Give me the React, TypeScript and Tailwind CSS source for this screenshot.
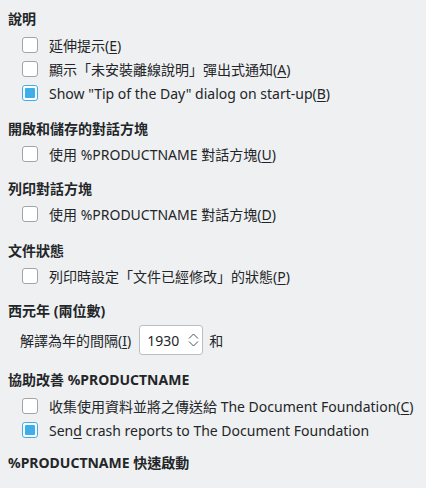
import type { ReactNode } from "react";

const FONT = "font-['Noto_Sans','Noto_Sans_CJK_TC',sans-serif]";

function Heading({ children }: { children: ReactNode }) {
  return <div className="flex h-5 items-center pl-2 font-bold">{children}</div>;
}

function Check({ checked, children }: { checked?: boolean; children: ReactNode }) {
  return (
    <div className="flex h-6 items-center pl-[22px]">
      <span
        className={`flex h-4 w-4 shrink-0 items-center justify-center rounded-[3px] border bg-white ${
          checked ? "border-[#3daee9]" : "border-[#a2a4a6]"
        }`}
      >
        {checked && <span className="h-2.5 w-2.5 rounded-[1px] bg-[#3daee9]" />}
      </span>
      <span className="ml-[11px] whitespace-nowrap">{children}</span>
    </div>
  );
}

const U = ({ children }: { children: ReactNode }) => (
  <span className="underline underline-offset-2">{children}</span>
);

export default function App() {
  return (
    <div className={`h-[488px] w-[426px] overflow-hidden bg-[#eff0f1] pt-2 text-[14px] text-[#232629] ${FONT}`}>
      <Heading>說明</Heading>
      <div className="mt-[5px]">
        <Check>
          延伸提示(<U>E</U>)
        </Check>
        <Check>
          顯示「未安裝離線說明」彈出式通知(<U>A</U>)
        </Check>
        <Check checked>
          Show "Tip of the Day" dialog on start-up(<U>B</U>)
        </Check>
      </div>

      <div className="mt-[13px]">
        <Heading>開啟和儲存的對話方塊</Heading>
        <div className="mt-1">
          <Check>
            使用 %PRODUCTNAME 對話方塊(<U>U</U>)
          </Check>
        </div>
      </div>

      <div className="mt-3">
        <Heading>列印對話方塊</Heading>
        <div className="mt-1">
          <Check>
            使用 %PRODUCTNAME 對話方塊(<U>D</U>)
          </Check>
        </div>
      </div>

      <div className="mt-[14px]">
        <Heading>文件狀態</Heading>
        <div className="mt-1">
          <Check>
            列印時設定「文件已經修改」的狀態(<U>P</U>)
          </Check>
        </div>
      </div>

      <div className="mt-3">
        <Heading>西元年 (兩位數)</Heading>
        <div className="mt-[5px] flex h-[30px] items-center pl-[20px]">
          <span>
            解譯為年的間隔(<U>I</U>)
          </span>
          <div className="ml-[8px] flex h-[30px] w-[64px] items-center rounded-[3px] border border-[#bcbebf] bg-white pl-[7px]">
            <span>1930</span>
            <svg className="ml-auto mr-[3px]" width="11" height="16" viewBox="0 0 11 16" fill="none" stroke="#4d4f52" strokeWidth="1">
              <path d="M1 6.5 L5.5 2 L10 6.5" />
              <path d="M1 9.5 L5.5 14 L10 9.5" />
            </svg>
          </div>
          <span className="ml-[6px]">和</span>
        </div>
      </div>

      <div className="mt-[14px]">
        <Heading>協助改善 %PRODUCTNAME</Heading>
        <div className="mt-[5px]">
          <Check>
            收集使用資料並將之傳送給 The Document Foundation(<U>C</U>)
          </Check>
          <Check checked>
            Sen<U>d</U> crash reports to The Document Foundation
          </Check>
        </div>
      </div>

      <div className="mt-[10px]">
        <Heading>%PRODUCTNAME 快速啟動</Heading>
      </div>
    </div>
  );
}
